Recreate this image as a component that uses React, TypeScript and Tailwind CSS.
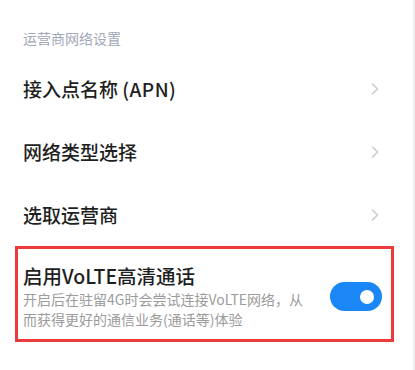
import { ReactElement } from 'react';

const font = { fontFamily: '"Noto Sans CJK SC", "Noto Sans", sans-serif' };

const Chevron = (): ReactElement => (
    <svg width="10" height="16" viewBox="0 0 10 16" fill="none">
        <path d="M2.5 3l5 5-5 5" stroke="#c8c8c8" strokeWidth="1.4" strokeLinecap="round" strokeLinejoin="round" />
    </svg>
);

interface RowProps {
    title: ReactElement | string;
}

const Row = (props: RowProps) => {
    return (
        <div className="h-[63px] flex items-center justify-between pl-[23px] pr-[33px]">
            <span className="text-[19px] font-medium text-[#1f1f1f] leading-none">{props.title}</span>
            <Chevron />
        </div>
    );
};

const App = () => {
    return (
        <div className="w-[415px] h-[370px] bg-white flex" style={font}>
            <div className="w-[413px] flex flex-col">
                {/* section header */}
                <div className="h-[57px] flex items-start pl-[23px] pt-[29px]">
                    <span className="text-[14px] text-[#a1a8b9] leading-[18px]">运营商网络设置</span>
                </div>

                <Row title={<>接入点名称 <span className="tracking-[0.5px]">(APN)</span></>} />
                <Row title="网络类型选择" />
                <Row title="选取运营商" />

                {/* volte, highlighted */}
                <div className="ml-[15px] w-[379px] h-[96px] border-[3px] border-[#ef3a3c] flex items-start justify-between pl-[5px] pr-[9px] pt-[14px]">
                    <div className="flex flex-col">
                        <span className="text-[19.5px] font-medium text-[#1f1f1f] leading-[26px]">启用VoLTE高清通话</span>
                        <span className="text-[14px] text-[#9b9b9b] leading-[20px] whitespace-nowrap">
                            开启后在驻留4G时会尝试连接VoLTE网络，从
                            <br />
                            而获得更好的通信业务(通话等)体验
                        </span>
                    </div>
                    <div className="w-[52px] h-[29px] rounded-full bg-[#1b86f6] flex items-center justify-end pr-[8px] mt-[19px]">
                        <div className="w-[14px] h-[14px] rounded-full bg-white" />
                    </div>
                </div>
            </div>
            <div className="w-[2px] bg-[#efefef]" />
        </div>
    );
};

export default App;
